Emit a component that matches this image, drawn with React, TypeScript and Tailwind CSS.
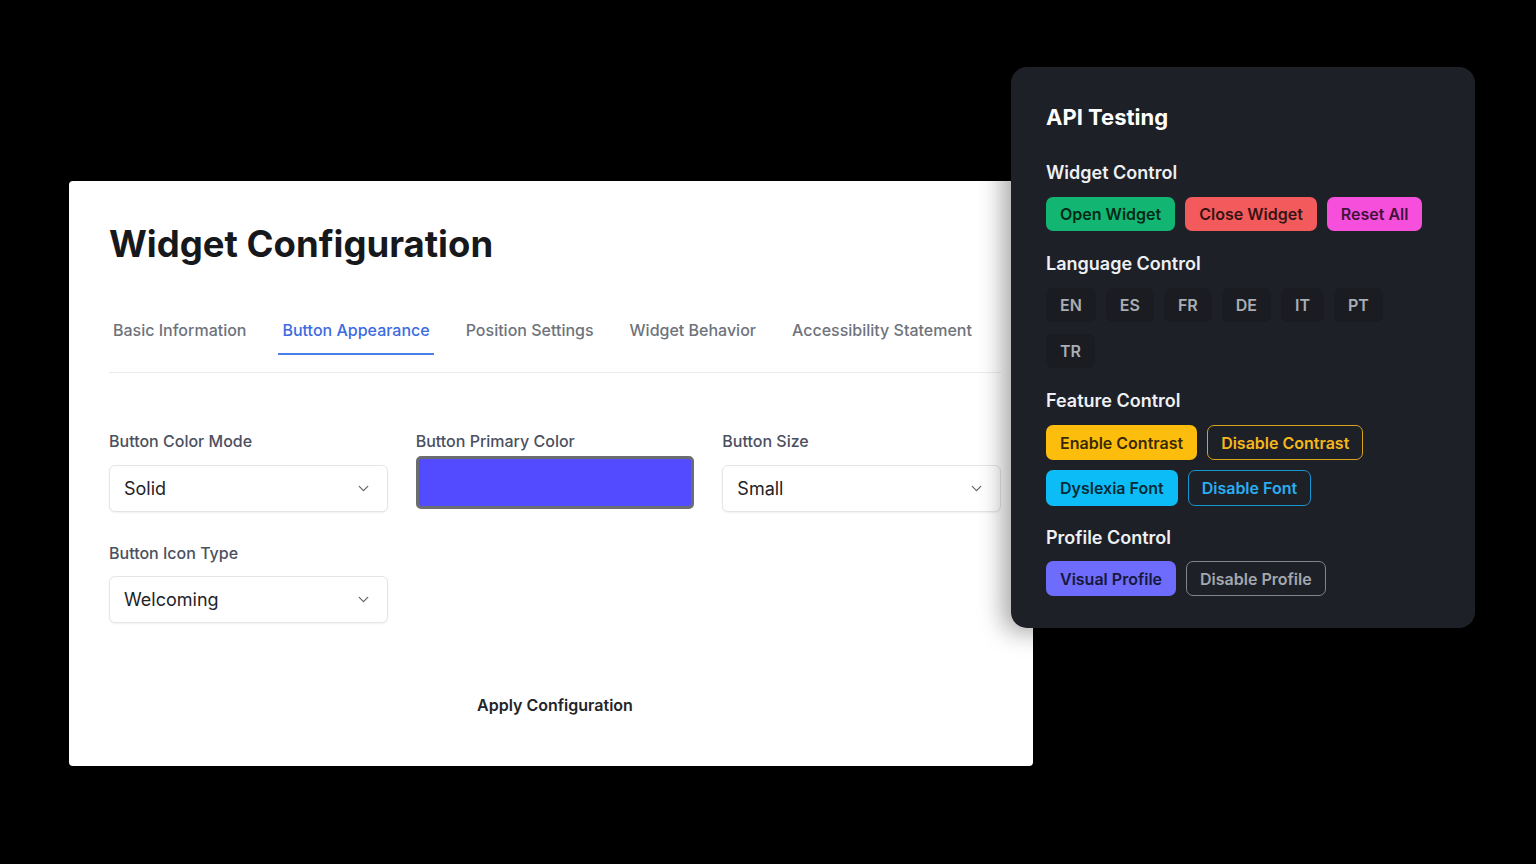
import React from "react";
import { ChevronDown } from "lucide-react";

const tabs = [
  "Basic Information",
  "Button Appearance",
  "Position Settings",
  "Widget Behavior",
  "Accessibility Statement",
];

function Select({ value }: { value: string }) {
  return (
    <div className="flex h-[47px] w-full items-center justify-between rounded-[6px] border border-[#e3e5e8] bg-white pl-[14px] pr-[15px] shadow-[0_1px_2px_rgba(0,0,0,0.06)]">
      <span className="text-[18px] leading-[24px] text-[#1f2328]">{value}</span>
      <ChevronDown className="h-[17px] w-[17px] text-[#5f6570]" strokeWidth={1.75} />
    </div>
  );
}

function Label({ children, className = "" }: { children: React.ReactNode; className?: string }) {
  return (
    <div className={"text-[16px] font-medium leading-[20px] text-[#4b5060] " + className}>{children}</div>
  );
}

function Heading({ children }: { children: React.ReactNode }) {
  return <div className="text-[18px] font-semibold leading-[28px] text-[#eef0f3]">{children}</div>;
}

const btn = "rounded-[7px] px-[14px] py-[7px] text-[16px] font-semibold leading-[20px]";
const outline = "rounded-[7px] border-[1.5px] px-[13px] py-[6px] text-[16px] font-semibold leading-[20px]";

export default function App() {
  return (
    <div
      className="relative h-[864px] w-full overflow-hidden bg-black"
      style={{ fontFamily: "Inter, 'Noto Sans', sans-serif" }}
    >
      {/* White configuration panel */}
      <div className="ml-[69px] mt-[181px] flex h-[585px] w-[964px] flex-col rounded-[4px] bg-white pl-[40px] pr-[32px] pt-[43px]">
        <h1 className="text-[36.5px] font-bold leading-[40px] text-[#16181c]">
          Widget Configuration
        </h1>
        <div className="mt-[54px] flex gap-[28px]">
          {tabs.map((t, i) => (
            <div
              key={t}
              className={
                i === 1
                  ? "border-b-2 border-[#4a7ee8] px-[4px] pb-[11px] text-[16px] font-medium leading-[24px] text-[#3d6be0]"
                  : "border-b-2 border-transparent px-[4px] pb-[11px] text-[16px] font-medium leading-[24px] text-[#6e737c]"
              }
            >
              {t}
            </div>
          ))}
        </div>
        <div className="mt-[17px] h-px w-full bg-[#e9ebee]" />

        <div className="mt-[58px] grid grid-cols-3 gap-x-[28px]">
          <div className="flex flex-col">
            <Label className="mb-[14px]">Button Color Mode</Label>
            <Select value="Solid" />
          </div>
          <div className="flex flex-col">
            <Label className="mb-[5px]">Button Primary Color</Label>
            <div className="h-[53px] w-full rounded-[5px] border-[3px] border-[#6c6d70] bg-[#524bff]" />
          </div>
          <div className="flex flex-col">
            <Label className="mb-[14px]">Button Size</Label>
            <Select value="Small" />
          </div>
        </div>

        <div className="mt-[31px] grid grid-cols-3 gap-x-[28px]">
          <div className="flex flex-col">
            <Label className="mb-[13px]">Button Icon Type</Label>
            <Select value="Welcoming" />
          </div>
        </div>

        <div className="mt-[70px] text-center text-[16px] font-semibold leading-[24px] text-[#22252a]">
          Apply Configuration
        </div>
      </div>

      {/* Floating dark API testing panel */}
      <div className="absolute left-[1011px] top-[67px] flex h-[561px] w-[464px] flex-col rounded-[16px] bg-[#1d2027] px-[35px] pt-[34px] shadow-[-8px_4px_24px_rgba(0,0,0,0.35)]">
        <div className="text-[22px] font-bold leading-[32px] text-white">API Testing</div>

        <div className="mt-[26px]">
          <Heading>Widget Control</Heading>
          <div className="mt-[10px] flex flex-wrap gap-[10px]">
            <button className={btn + " bg-[#12b571] text-black/80"}>Open Widget</button>
            <button className={btn + " bg-[#f35a5c] text-black/80"}>Close Widget</button>
            <button className={btn + " bg-[#f54fdc] text-black/75"}>Reset All</button>
          </div>
        </div>

        <div className="mt-[19px]">
          <Heading>Language Control</Heading>
          <div className="mt-[10px] flex flex-wrap gap-x-[10px] gap-y-[12px]">
            {["EN", "ES", "FR", "DE", "IT", "PT", "TR"].map((l) => (
              <button key={l} className={btn + " bg-[#1a1c21] font-bold text-[#a9aeb5]"}>
                {l}
              </button>
            ))}
          </div>
        </div>

        <div className="mt-[19px]">
          <Heading>Feature Control</Heading>
          <div className="mt-[10px] flex flex-wrap gap-x-[10px] gap-y-[10px]">
            <button className={btn + " h-[35px] bg-[#fdbd0d] text-black/80"}>Enable Contrast</button>
            <button className={outline + " h-[35px] border-[#d9a21c] text-[#f6b71c]"}>Disable Contrast</button>
            <button className={btn + " h-[36px] bg-[#0cbcf7] text-black/80"}>Dyslexia Font</button>
            <button className={outline + " h-[36px] border-[#1796cf] text-[#2aaef0]"}>Disable Font</button>
          </div>
        </div>

        <div className="mt-[18px]">
          <Heading>Profile Control</Heading>
          <div className="mt-[9px] flex flex-wrap gap-[10px]">
            <button className={btn + " h-[35px] bg-[#6e6cfd] text-[#16183a]"}>Visual Profile</button>
            <button className={outline + " h-[35px] border-[#80848c] text-[#a3a7ae]"}>Disable Profile</button>
          </div>
        </div>
      </div>
    </div>
  );
}
